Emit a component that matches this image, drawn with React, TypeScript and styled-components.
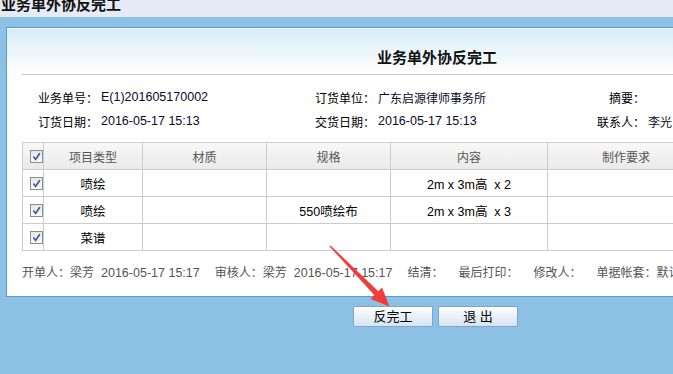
import React from "react";
import styled, { createGlobalStyle } from "styled-components";

const FONT = `"Liberation Sans", "Noto Sans CJK SC", sans-serif`;

const Global = createGlobalStyle`
  html, body { margin: 0; padding: 0; }
  body {
    background: #8cc1e5;
    font-family: ${FONT};
    overflow: hidden;
  }
`;

const Page = styled.div`
  position: relative;
  width: 673px;
  height: 374px;
  overflow: hidden;
  background: #8cc1e5;
`;

const TopBar = styled.div`
  height: 17px;
  background: #e5ebf5;
  overflow: hidden;
`;

const TopTitle = styled.div`
  margin-top: -4px;
  padding-left: 1px;
  font-size: 15px;
  line-height: 17px;
  font-weight: 700;
  color: #111;
  white-space: nowrap;
`;

const Main = styled.div`
  padding: 10px 0 0 6px;
`;

const Panel = styled.div`
  width: 860px;
  border: 1px solid #5a9bd3;
  background: #fff;
`;

const HeaderBand = styled.div`
  padding: 0 15px;
  background: linear-gradient(#ffffff 0, #ffffff 1px, #d9ecf9 1px, #ffffff 46px);
`;

const TitleBox = styled.div`
  height: 47px;
  box-sizing: border-box;
  padding-top: 20px;
  border-bottom: 1px solid #c9c9c9;
  text-align: center;
  font-size: 15px;
  line-height: 20px;
  font-weight: 700;
  color: #111;
`;

const Body = styled.div`
  padding: 10px 15px 13px 15px;
`;

const InfoGrid = styled.div`
  display: grid;
  grid-template-columns: 76px 195px 76px 188px 76px 1fr;
  column-gap: 3px;
  grid-auto-rows: 24px;
  align-items: center;
  font-size: 12px;
  color: #000;
`;

const InfoLabel = styled.div`
  text-align: right;
  white-space: nowrap;
`;

const InfoValue = styled.div<{ $num?: boolean }>`
  white-space: nowrap;
  font-size: ${(p) => (p.$num ? "12.5px" : "12px")};
  color: #0a0a2a;
`;

const Grid = styled.div`
  margin-top: 9px;
  display: grid;
  grid-template-columns: 21px 99px 124px 124px 157px 157px;
  grid-auto-rows: 27px;
  border-top: 1px solid #cccccc;
  border-left: 1px solid #cccccc;
  width: max-content;
`;

const Cell = styled.div<{ $head?: boolean; $check?: boolean }>`
  box-sizing: border-box;
  border-right: 1px solid #cccccc;
  border-bottom: 1px solid #cccccc;
  display: flex;
  align-items: center;
  justify-content: ${(p) => (p.$check ? "flex-start" : "center")};
  padding-left: ${(p) => (p.$check ? "7px" : "0")};
  font-size: ${(p) => (p.$head ? "12px" : "12.5px")};
  white-space: pre;
  color: ${(p) => (p.$head ? "#555" : "#000")};
  background: ${(p) =>
    p.$head ? "linear-gradient(#f8f8f8, #eaeaea)" : "#fff"};
`;

const Box = styled.span`
  width: 13px;
  height: 13px;
  box-sizing: border-box;
  border: 1px solid #8d8d8d;
  background: linear-gradient(#e6e6e6, #fbfbfb);
  display: flex;
  align-items: center;
  justify-content: center;
`;

const Footer = styled.div`
  margin-top: 12px;
  display: flex;
  gap: 15px;
  font-size: 12px;
  line-height: 20px;
  color: #555;
  white-space: nowrap;
`;

const FooterItem = styled.div`
  display: flex;
  gap: 7px;
`;

const FooterDate = styled.span`
  font-size: 12.5px;
`;

const ButtonRow = styled.div`
  width: 859px;
  margin-top: 9px;
  display: flex;
  justify-content: center;
  gap: 5px;
`;

const Button = styled.button`
  width: 80px;
  height: 21px;
  margin: 0;
  padding: 0;
  border: 1px solid #7ea5cf;
  border-radius: 2px;
  background: linear-gradient(#fdfeff, #d6e4f2);
  font-family: ${FONT};
  font-size: 13px;
  line-height: 19px;
  color: #000;
  white-space: pre;
`;

const Overlay = styled.svg`
  position: absolute;
  left: 0;
  top: 0;
  pointer-events: none;
`;

const Check = () => (
  <Box>
    <svg width="9" height="9" viewBox="0 0 9 9">
      <path d="M1.4 4.6 L3.6 7.4 L7.8 1.2" fill="none" stroke="#3553a8" strokeWidth="1.6" />
    </svg>
  </Box>
);

const rows = [
  { type: "喷绘", mat: "", spec: "", content: "2m x 3m高  x 2", req: "" },
  { type: "喷绘", mat: "", spec: "550喷绘布", content: "2m x 3m高  x 3", req: "" },
  { type: "菜谱", mat: "", spec: "", content: "", req: "" },
];

export default function App() {
  return (
    <Page>
      <Global />
      <TopBar>
        <TopTitle>业务单外协反完工</TopTitle>
      </TopBar>
      <Main>
        <Panel>
          <HeaderBand>
            <TitleBox>业务单外协反完工</TitleBox>
          </HeaderBand>
          <Body>
            <InfoGrid>
              <InfoLabel>业务单号：</InfoLabel>
              <InfoValue $num>E(1)201605170002</InfoValue>
              <InfoLabel>订货单位：</InfoLabel>
              <InfoValue>广东启源律师事务所</InfoValue>
              <InfoLabel>摘要：</InfoLabel>
              <InfoValue></InfoValue>
              <InfoLabel>订货日期：</InfoLabel>
              <InfoValue $num>2016-05-17 15:13</InfoValue>
              <InfoLabel>交货日期：</InfoLabel>
              <InfoValue $num>2016-05-17 15:13</InfoValue>
              <InfoLabel>联系人：</InfoLabel>
              <InfoValue>李光</InfoValue>
            </InfoGrid>
            <Grid>
              <Cell $head $check>
                <Check />
              </Cell>
              <Cell $head>项目类型</Cell>
              <Cell $head>材质</Cell>
              <Cell $head>规格</Cell>
              <Cell $head>内容</Cell>
              <Cell $head>制作要求</Cell>
              {rows.map((r, i) => (
                <React.Fragment key={i}>
                  <Cell $check>
                    <Check />
                  </Cell>
                  <Cell>{r.type}</Cell>
                  <Cell>{r.mat}</Cell>
                  <Cell>{r.spec}</Cell>
                  <Cell>{r.content}</Cell>
                  <Cell>{r.req}</Cell>
                </React.Fragment>
              ))}
            </Grid>
            <Footer>
              <FooterItem>
                <span>开单人：梁芳</span>
                <FooterDate>2016-05-17 15:17</FooterDate>
              </FooterItem>
              <FooterItem>
                <span>审核人：梁芳</span>
                <FooterDate>2016-05-17 15:17</FooterDate>
              </FooterItem>
              <FooterItem>
                <span>结清：</span>
              </FooterItem>
              <FooterItem>
                <span>最后打印：</span>
              </FooterItem>
              <FooterItem>
                <span>修改人：</span>
              </FooterItem>
              <FooterItem>
                <span>单据帐套：默认</span>
              </FooterItem>
            </Footer>
          </Body>
        </Panel>
        <ButtonRow>
          <Button>反完工</Button>
          <Button>退 出</Button>
        </ButtonRow>
      </Main>
      <Overlay width="673" height="374" viewBox="0 0 673 374">
        <polygon
          points="330.5,245.5 378.3,291.3 382,287.6 389.5,306.5 370.6,299 374.3,295.1 329.5,246.5"
          fill="#f23b3b"
        />
      </Overlay>
    </Page>
  );
}
